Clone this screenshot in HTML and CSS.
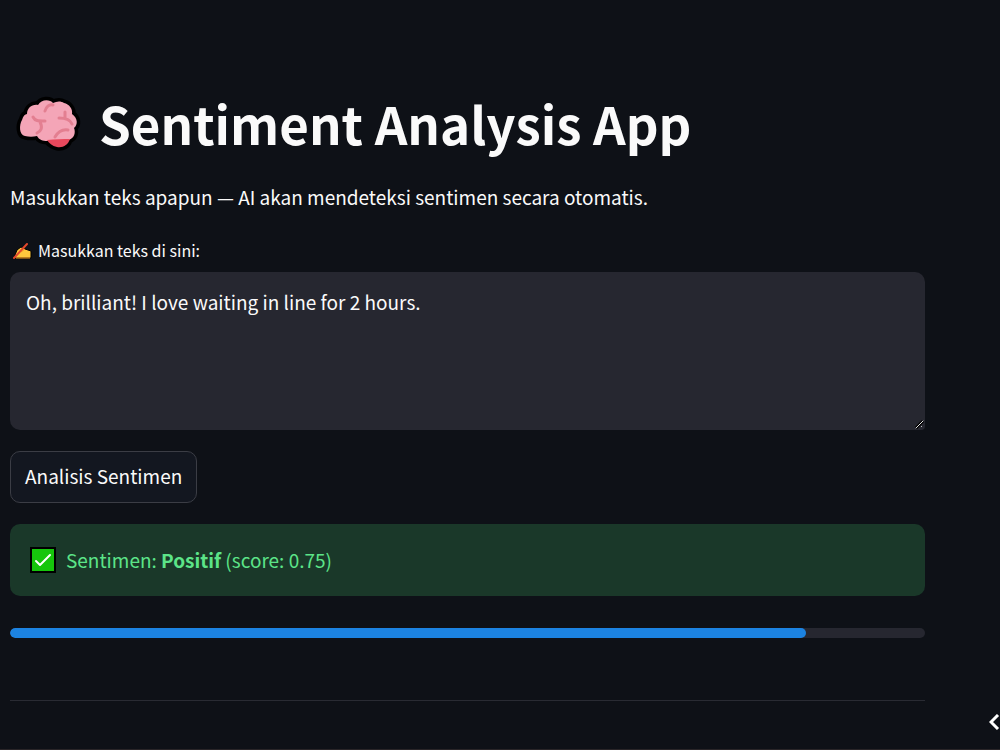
FILE: index.html
```
<!DOCTYPE html>
<html lang="id">
<head>
<meta charset="utf-8">
<meta name="viewport" content="width=device-width, initial-scale=1">
<title>Sentiment Analysis App</title>
<link rel="stylesheet" href="styles.css">
</head>
<body>
<main class="page">
  <h1 class="title">
    <svg class="brain" viewBox="0 -5 66 62" aria-hidden="true">
      <path d="M10 39C4 38 4 28 7 23C8 19 10 17 12 17C12 11 17 7 23 8C26 2 35 2 38 6C42 4 46 4 49 6C54 7 58 12 57 17C63 21 63 28 59 31C61 36 59 41 54 43C53 48 48 51 42 50C37 49 34 46 32 44C28 44 24 43 22 39C18 40 14 40 10 39Z" fill="#000" stroke="#000" stroke-width="7" stroke-linejoin="round"/>
      <path d="M10 39C4 38 4 28 7 23C8 19 10 17 12 17C12 11 17 7 23 8C26 2 35 2 38 6C42 4 46 4 49 6C54 7 58 12 57 17C63 21 63 28 59 31C61 36 59 41 54 43C48 44 38 44 32 44C28 44 24 43 22 39C18 40 14 40 10 39Z" fill="#f4a5b7"/>
      <path d="M32 43C40 42 48 42 55 42C53 48 48 51 42 50C37 49 34 46 32 43Z" fill="#e8485c"/>
      <path d="M18 20C20 24 23 24 30 24M25 25C28 31 26 34 22 36M30 14C31 10 34 7 38 8M44 21C49 21 55 22 57 27M50 15V21M40 40C43 35 47 32 53 33" fill="none" stroke="#e37f91" stroke-width="3" stroke-linecap="round"/>
    </svg>
    <span>Sentiment Analysis App</span>
  </h1>
  <p class="intro">Masukkan teks apapun — AI akan mendeteksi sentimen secara otomatis.</p>
  <form class="form">
    <label class="label" for="text">
      <svg class="hand" viewBox="0 0 20 19" aria-hidden="true">
        <path d="M3 14L5 9L9 6L13 8L19 10V17H6L2 17Z" fill="#ffc83d" stroke="#000" stroke-width="1" stroke-linejoin="round"/>
        <path d="M9 11L13 8M4 17H18" stroke="#f59b23" stroke-width="1"/>
        <path d="M2 17L15 3" stroke="#e3482d" stroke-width="2" stroke-linecap="round"/>
      </svg>
      <span>Masukkan teks di sini:</span>
    </label>
    <div class="field">
      <textarea class="text" id="text">Oh, brilliant! I love waiting in line for 2 hours.</textarea>
      <svg class="grip" viewBox="0 0 12 12" aria-hidden="true"><path d="M0 0H12V8Q12 12 8 12H0Z" fill="#262730"/><path d="M3 10L10 3" stroke="#000" stroke-width="3"/><path d="M3 10L10 3" stroke="#e4e4e6" stroke-width="1" stroke-linecap="round"/><path d="M8 9L9 8" stroke="#bbb"/></svg>
    </div>
    <button class="button" type="button">Analisis Sentimen</button>
  </form>
  <div class="alert" role="status">
    <svg class="check" viewBox="0 0 26 26" aria-hidden="true">
      <rect x="1" y="1" width="24" height="24" fill="#16c60c" stroke="#000" stroke-width="2"/>
      <path d="M6 14L10 18L20 8" fill="none" stroke="#fff" stroke-width="2" stroke-linecap="round" stroke-linejoin="round"/>
    </svg>
    <span>Sentimen: <strong>Positif</strong> (score: 0.75)</span>
  </div>
  <div class="track" role="progressbar" aria-label="Score" aria-valuenow="87" aria-valuemin="0" aria-valuemax="100"><div class="fill" style="width: 87%"></div></div>
  <hr class="rule">
</main>
<button class="toggle" type="button" aria-label="Manage app">
  <svg class="chevron" viewBox="0 0 11 16" aria-hidden="true"><path d="M9 1L2 8L9 15" fill="none" stroke="#fff" stroke-width="3"/></svg>
</button>
</body>
</html>
```
FILE: styles.css
```
* { box-sizing: border-box; }
body {
  margin: 0;
  min-height: 100vh;
  overflow: hidden;
  background: #0e1117;
  border-bottom: 1px solid #292528;
  color: #fafafa;
  font-family: "Noto Sans CJK SC", "Noto Sans CJK JP", "Noto Sans", sans-serif;
  font-size: 19px;
  line-height: 32px;
}
.page { padding: 89px 75px 0 10px; }
.title {
  display: flex;
  align-items: center;
  gap: 18px;
  margin: 0;
  padding-left: 5px;
  font-size: 51px;
  font-weight: 700;
  line-height: 68px;
}
.brain { width: 66px; height: 62px; }
.intro { margin: 24px 0 21px; }
.form { display: flex; flex-direction: column; align-items: flex-start; }
.label {
  display: flex;
  align-items: center;
  gap: 6px;
  margin-bottom: 6px;
  padding-left: 2px;
  font-size: 16px;
}
.hand { width: 20px; height: 19px; }
.field { position: relative; width: 100%; margin-bottom: 21px; }
.text {
  display: block;
  width: 100%;
  height: 158px;
  padding: 14px 16px;
  border: 0;
  border-radius: 10px;
  background: #262730;
  color: #fafafa;
  font: inherit;
  resize: vertical;
}
.grip {
  position: absolute;
  right: 0;
  bottom: 0;
  width: 12px;
  height: 12px;
  pointer-events: none;
}
.button {
  height: 52px;
  padding: 0 14px 2px;
  border: 1px solid #3b3d45;
  border-radius: 10px;
  background: #131720;
  color: #fafafa;
  font: inherit;
}
.alert {
  display: flex;
  align-items: center;
  gap: 10px;
  margin: 21px 0 32px;
  padding: 20px;
  border-radius: 10px;
  background: #1a3829;
  color: #5ce488;
}
.check { width: 26px; height: 26px; }
.track {
  height: 10px;
  overflow: hidden;
  border-radius: 5px;
  background: #262730;
}
.fill { height: 100%; border-radius: 5px; background: #1c83e1; }
.rule { margin: 62px 0 0; border: 0; border-top: 1px solid #292b33; }
.toggle {
  position: fixed;
  right: 0;
  bottom: 20px;
  padding: 0;
  border: 0;
  background: none;
}
.chevron { display: block; width: 11px; height: 16px; }
```
